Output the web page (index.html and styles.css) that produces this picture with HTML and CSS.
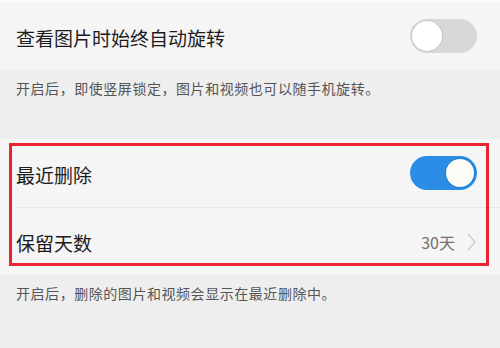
FILE: index.html
```html
<!DOCTYPE html>
<html lang="zh-CN">
<head>
<meta charset="utf-8">
<link rel="stylesheet" href="styles.css">
</head>
<body>
<div class="topline"></div>
<div class="row">
  <span class="label">查看图片时始终自动旋转</span>
  <span class="switch"><span class="knob"></span></span>
</div>
<div class="desc">开启后，即使竖屏锁定，图片和视频也可以随手机旋转。</div>
<div class="group">
  <div class="row">
    <span class="label">最近删除</span>
    <span class="switch on"><span class="knob"></span></span>
  </div>
  <div class="row divided">
    <span class="label">保留天数</span>
    <span class="value">30天
      <svg class="chev" width="9" height="18" viewBox="0 0 9 18"><path d="M1 1 L8 9 L1 17" fill="none" stroke="#cdcdcd" stroke-width="1.4"/></svg>
    </span>
  </div>
  <div class="highlight"></div>
</div>
<div class="desc">开启后，删除的图片和视频会显示在最近删除中。</div>
</body>
</html>
```
FILE: styles.css
```css
html, body {
  margin: 0;
  padding: 0;
}
body {
  width: 500px;
  height: 348px;
  overflow: hidden;
  background: #eeeeee;
  font-family: "Noto Sans CJK SC", "Noto Sans", sans-serif;
}
.topline {
  height: 2px;
  background: #fbfbfb;
}
.row {
  height: 68px;
  background: #f5f5f5;
  display: flex;
  align-items: center;
  justify-content: space-between;
  padding: 0 23px 0 16px;
  box-sizing: border-box;
}
.label {
  font-size: 19px;
  color: #1c1c1c;
  line-height: 1;
  margin-top: 2px;
}
.switch {
  width: 67px;
  height: 34px;
  border-radius: 17px;
  background: #d8d8d8;
  position: relative;
  box-sizing: border-box;
  flex: none;
}
.switch .knob {
  position: absolute;
  top: 2px;
  left: 2px;
  width: 30px;
  height: 30px;
  border-radius: 50%;
  background: #ffffff;
  box-shadow: 0 0 0 1px #c8c8c8;
}
.switch.on {
  background: #2b8de6;
}
.switch.on .knob {
  left: auto;
  right: 3px;
  top: 3px;
  width: 28px;
  height: 28px;
  background: #fdfdf7;
  box-shadow: 0 0 0 1px #1f7ccf;
}
.desc {
  height: 69px;
  box-sizing: border-box;
  padding: 8px 16px 0;
  font-size: 14px;
  letter-spacing: 0.55px;
  line-height: 20px;
  color: #555555;
}
.group {
  position: relative;
}
.divided {
  position: relative;
  padding-right: 24px;
}
.divided::before {
  content: "";
  position: absolute;
  left: 16px;
  right: 0;
  top: 0;
  height: 1px;
  background: #e7e7e7;
}
.value {
  display: flex;
  align-items: center;
  gap: 12px;
  font-size: 16px;
  color: #707070;
  margin-top: 2px;
}
.chev {
  display: block;
}
.highlight {
  position: absolute;
  left: 9px;
  right: 11px;
  top: 4px;
  bottom: 9px;
  border: 3px solid #ec2330;
  pointer-events: none;
}
```
